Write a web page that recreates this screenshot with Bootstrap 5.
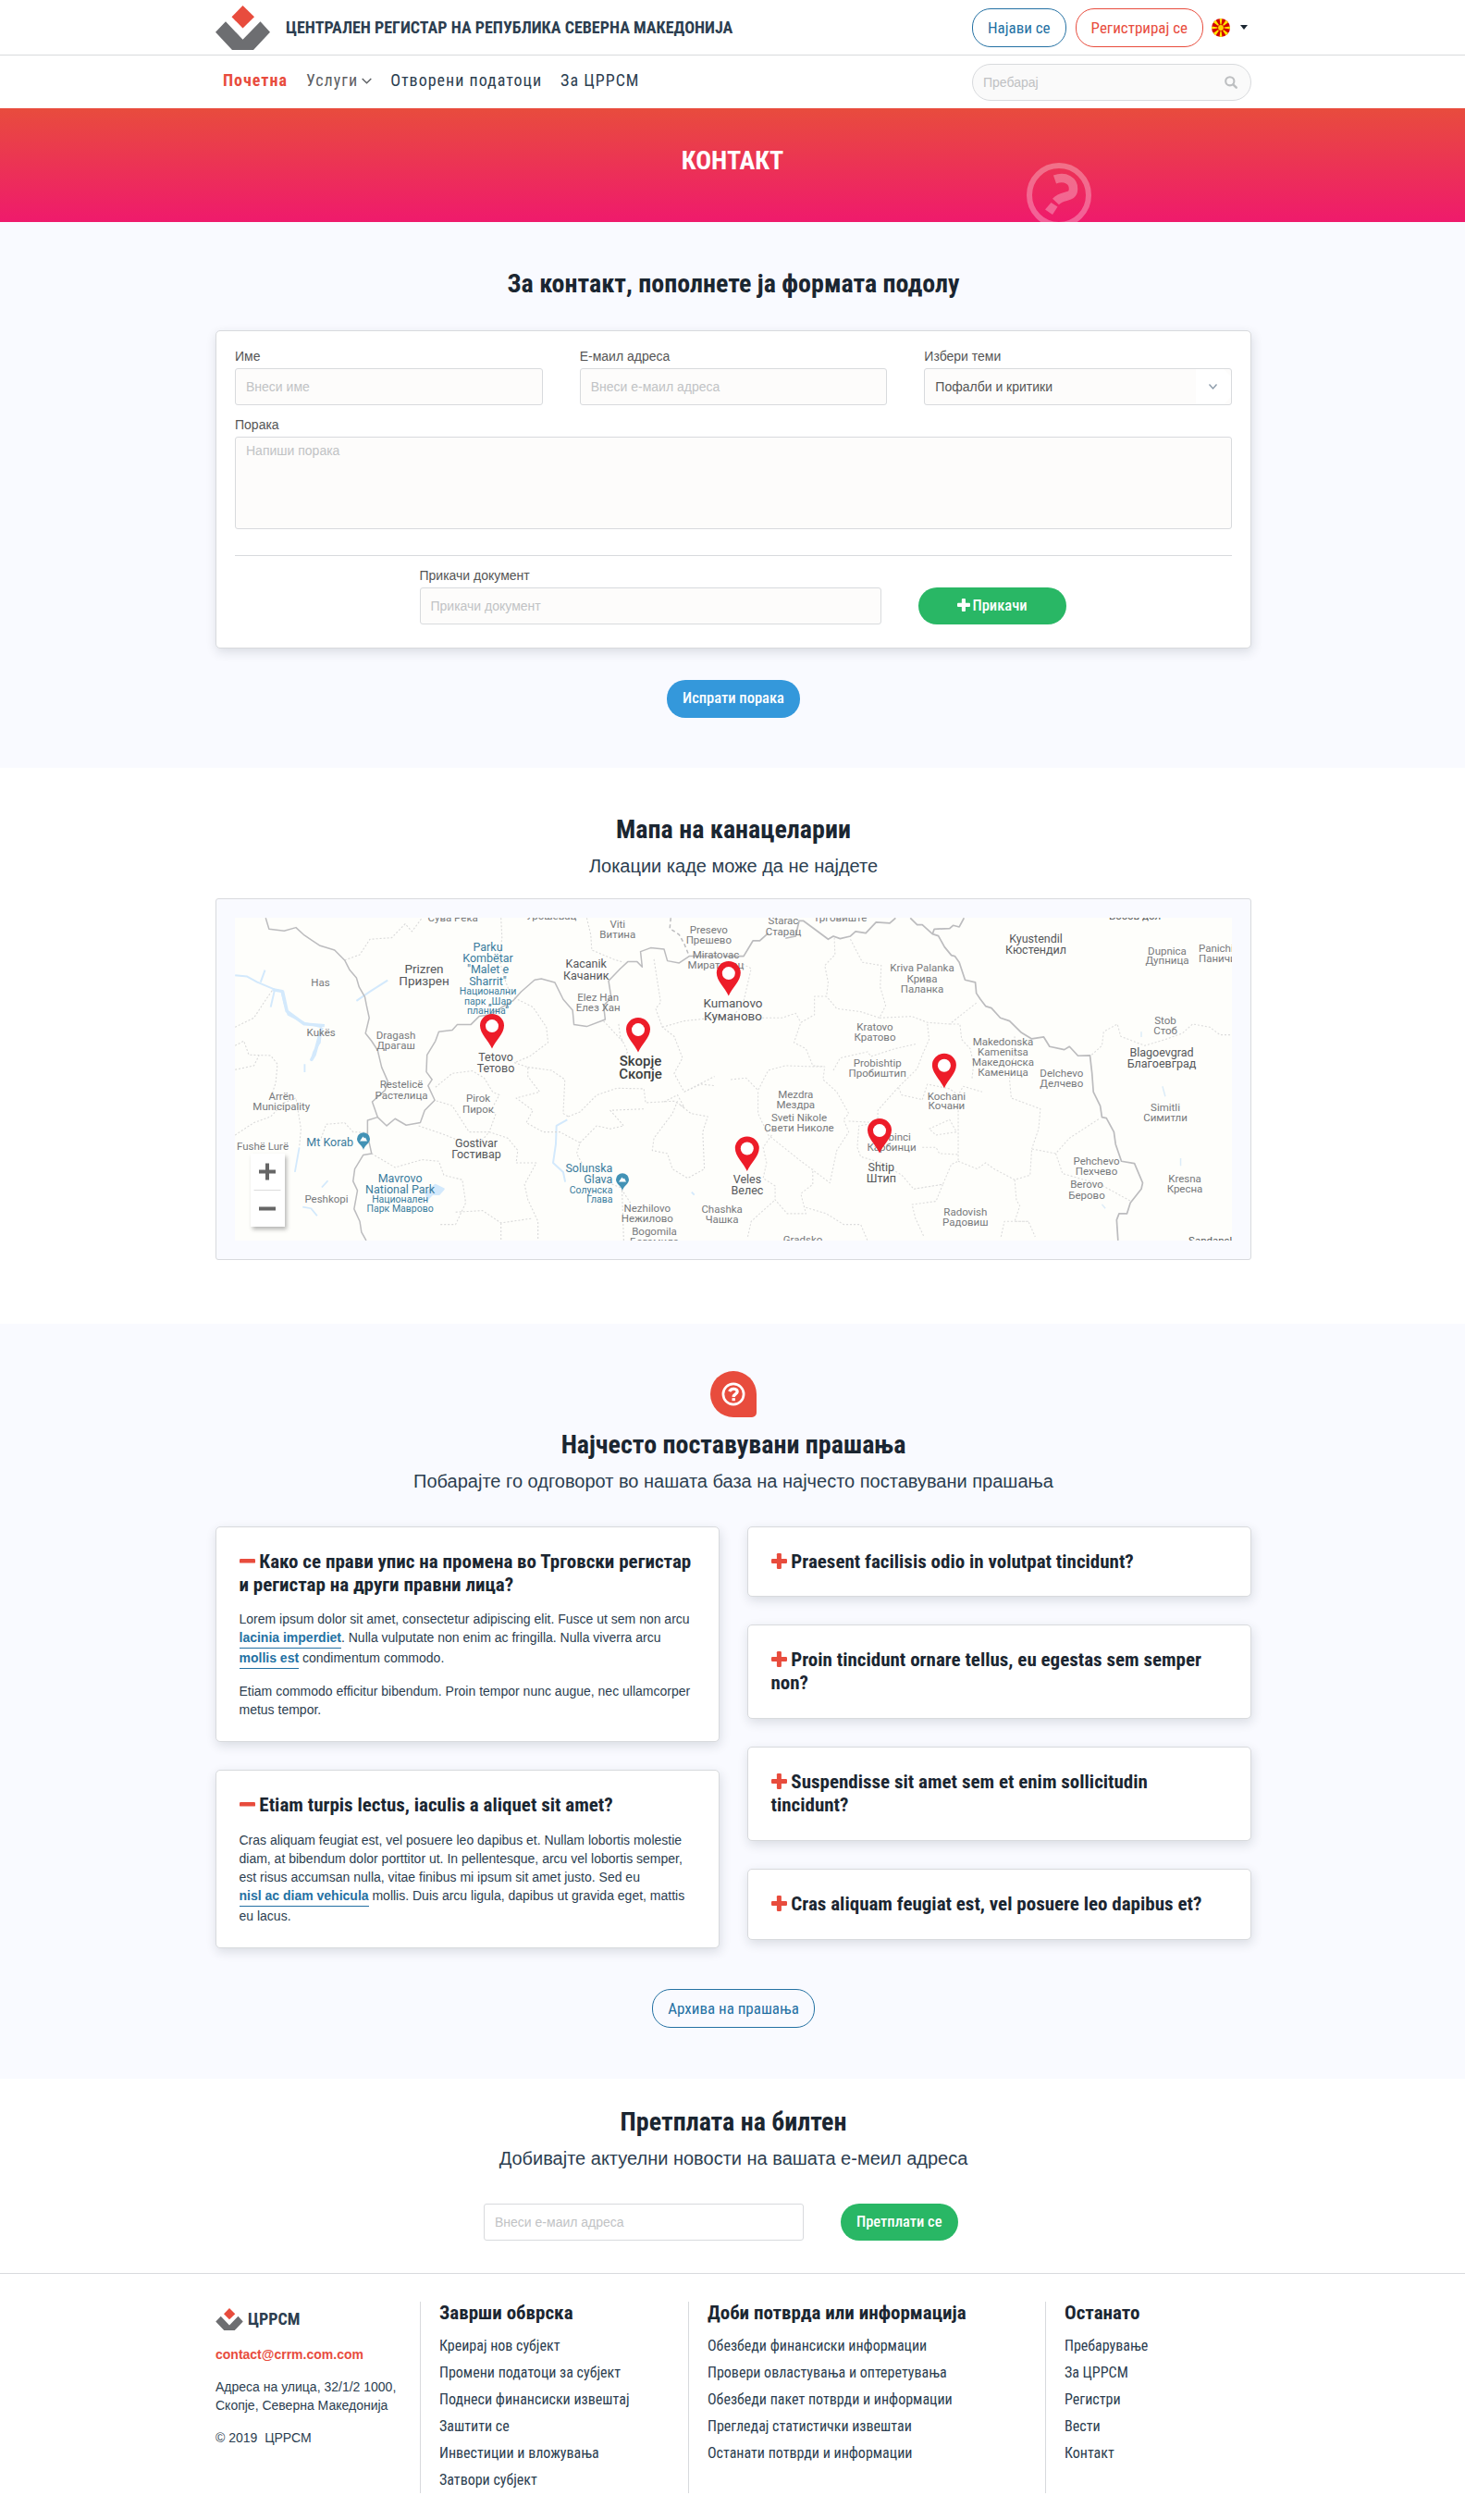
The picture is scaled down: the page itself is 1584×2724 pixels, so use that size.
<!DOCTYPE html>
<html lang="mk">
<head>
<meta charset="utf-8">
<meta name="viewport" content="width=device-width, initial-scale=1">
<title>ЦРРСМ - Контакт</title>
<link rel="stylesheet" href="https://cdn.jsdelivr.net/npm/bootstrap@5.3.0/dist/css/bootstrap.min.css">
<style>
:root{--ink:#2c3e50;--dark:#1b2631;--line:#d8dadd;--red:#e84c3d;--blue:#2471a3;--pale:#f9faff}
body{font-family:"Liberation Sans",Arial,sans-serif;font-size:14px;line-height:20px;color:var(--ink);background:#fff}
.container{max-width:1122px;padding:0 0 0 2px}
.cond,h1,h2,h3,h4,.btn{font-family:"Roboto Condensed",Roboto,sans-serif}
h1,h2,h3,h4{color:var(--dark);font-weight:700;margin:0;line-height:1.2}
h1,h2{font-size:28px}
h3,h4{font-size:21px}
.subtitle{font-size:20px;line-height:24px;margin:10px 0 0}
a{text-decoration:none}
.topline{height:60px;border-bottom:1px solid var(--line)}
.brand-name{font-size:18px;font-weight:700;line-height:22px;margin-left:17px}
.btn{font-size:17px;line-height:22px;border-radius:20px;padding:0 16px;height:41px;display:inline-flex;align-items:center;justify-content:center;white-space:nowrap}
.btn-line-blue{border:1px solid var(--blue);color:var(--blue)}
.btn-line-red{border:1px solid var(--red);color:var(--red)}
.topline .btn{height:42px}
.btn-send{background:#3498db;color:#fff;font-size:16.5px;font-weight:500}
.btn-go{background:#29b765;color:#fff;height:40px;font-size:16.5px;font-weight:500}
.lang-caret{border:4px solid transparent;border-top:5px solid var(--dark);border-bottom:0;margin-left:11px}
.menu-bar{height:57px}
.menu-bar .nav-link{padding:0;font-size:18px;line-height:24px;letter-spacing:1px;color:var(--ink)}
.menu-bar .nav-link.active{color:var(--red);font-weight:700}
.menu-bar .nav-link.has-sub{color:#5d6064}
.search-box{width:302px;height:40px;border:1px solid var(--line);border-radius:20px;background:#fafafa;color:#bfc1c3;padding:0 14px 0 11px}
.hero{height:123px;background:linear-gradient(#e84c3d,#ef1a6c);overflow:hidden;position:relative}
.hero h1{color:#fff;padding-top:40px}
.hero-mark{position:absolute;left:1110px;top:58px}
.pale{background:var(--pale)}
.panel{background:#fff;border:1px solid var(--line);border-radius:5px;box-shadow:1px 4px 12px rgba(30,40,60,.14)}
.form-label{margin:0 0 3px;line-height:20px;color:#555;display:block}
.form-control,.form-select{height:40px;border:1px solid var(--line);border-radius:3px;background-color:#fdfcfb;font-size:14px;line-height:20px;padding:0 11px;color:#555}
.form-control::placeholder{color:#c1c3c5;opacity:1}
.form-row{display:flex;gap:40px}
.form-row>div{flex:1}
textarea.form-control{height:100px;padding-top:4px;resize:none}
.pick{position:relative}
.pick .form-select{background-image:none}
.pick svg{position:absolute;right:1px;bottom:1px}
.form-panel{padding:17px 20px 25px;margin-top:33px}
.rule{height:1px;background:var(--line);margin:28px 0 11px}
.map-frame{border:1px solid var(--line);border-radius:3px;padding:20px;margin-top:23px;height:391px}
.map-canvas{display:block;font-family:Roboto,sans-serif}
.faq-badge{width:50px;height:50px;background:var(--red);border-radius:25px 25px 5px 25px;display:flex;align-items:center;justify-content:center}
.faq-list{width:545px;display:flex;flex-direction:column;gap:30px}
.faq-item{padding:25px 24px 24.5px 24.5px}
.faq-item p{margin:14px 0 0}
.faq-item p a{display:inline-block;font-weight:700;color:var(--blue);border-bottom:1px solid var(--blue);padding-bottom:1px}
.sign{vertical-align:-1px}
.mail-input{width:346px;background:#fff}
.site-footer{border-top:1px solid var(--line);padding-top:30px}
.foot-col{height:207px;border-left:1px solid var(--line);padding-left:20px}
.foot-col ul{list-style:none;margin:8px 0 0;padding:0;font-size:16px;line-height:29px}
.foot-col a,.foot-col li{color:var(--ink)}
.foot-about p{margin:0 0 15px}
</style>
</head>
<body>
<svg width="0" height="0" class="position-absolute">
  <symbol id="logo" viewBox="0 0 59 48"><path fill="#e84c3d" d="M29.500 0 42 12.300 29.500 24.500 17.500 12.300z"/><path fill="#6d6e71" d="M11 17.300 0 28.800 18 48H41L59 28.800 48.500 17.300 29.500 36.800z"/></symbol>
  <symbol id="plus" viewBox="0 0 17 17"><rect x="5.900" width="5" height="17" rx="1.200"/><rect y="5.900" width="17" height="5" rx="1.200"/></symbol>
  <symbol id="minus" viewBox="0 0 17 17"><rect y="6" width="17" height="4.600" rx="1.200"/></symbol>
</svg>

<header>
  <div class="topline">
    <div class="container d-flex align-items-center h-100">
      <svg width="59" height="48"><use href="#logo"/></svg>
      <span class="brand-name cond">ЦЕНТРАЛЕН РЕГИСТАР НА РЕПУБЛИКА СЕВЕРНА МАКЕДОНИЈА</span>
      <div class="d-flex align-items-center ms-auto" style="width:302px">
        <a class="btn btn-line-blue" href="#">Најави се</a>
        <a class="btn btn-line-red" href="#" style="margin:0 9px 0 10px">Регистрирај се</a>
        <svg width="20" height="20" viewBox="0 0 20 20"><clipPath id="disc"><circle cx="10" cy="10" r="10"/></clipPath><g clip-path="url(#disc)"><path fill="#d20000" d="M0 0h20v20H0z"/><path fill="#ffe600" d="M8.500 0h3l-1.500 10zM8.500 20h3l-1.500-10zM0 8.500v3l10-1.500zM20 8.500v3l-10-1.500zM1 1h3l6 9L1 3.500zM19 1h-3l-6 9L19 3.500zM1 19h3l6-9L1 16.500zM19 19h-3l-6-9L19 16.500z"/><circle cx="10" cy="10" r="3.600" fill="#d20000"/><circle cx="10" cy="10" r="2.900" fill="#ffd400"/></g></svg>
        <span class="lang-caret"></span>
      </div>
    </div>
  </div>
  <div class="menu-bar">
    <div class="container d-flex align-items-center h-100">
      <nav class="nav cond" style="gap:20px;padding-left:8px;margin-top:-3px">
        <a class="nav-link active" href="#">Почетна</a>
        <a class="nav-link has-sub" href="#">Услуги<svg class="ms-1" width="11" height="7" viewBox="0 0 11 7" fill="none" stroke="#5d6064" stroke-width="1.400" style="vertical-align:2px"><path d="M.7.9 5.500 5.700 10.300.9"/></svg></a>
        <a class="nav-link" href="#">Отворени податоци</a>
        <a class="nav-link" href="#">За ЦРРСМ</a>
      </nav>
      <div class="search-box d-flex align-items-center justify-content-between ms-auto">Пребарај
        <svg width="14" height="14" viewBox="0 0 14 14" fill="none" stroke="#bdbfc1"><circle cx="5.800" cy="5.800" r="4.600" stroke-width="2.100"/><path d="M9.300 9.300 12.700 12.700" stroke-width="2.400" stroke-linecap="round"/></svg>
      </div>
    </div>
  </div>
</header>

<div class="hero text-center">
  <h1>КОНТАКТ</h1>
  <svg class="hero-mark" width="70" height="72" viewBox="-35 -36 70 72"><g opacity=".3"><circle r="32" stroke-width="6" fill="none" stroke="#fff"/><path stroke-width="9.500" fill="none" stroke="#fff" d="M-4.500-17C7-21 16-15.500 15.500-6.500 15 4 4.500-1.500-3.500 7"/><path fill="#fff" d="M-8.500 8 -1.500 12.500 -7 21 -15 15.500z"/></g></svg>
</div>

<section class="pale" style="height:590px;padding-top:50px">
  <div class="container">
    <h2 class="text-center">За контакт, пополнете ја формата подолу</h2>
    <form class="panel form-panel">
      <div class="form-row">
        <div><label class="form-label">Име</label><input class="form-control" placeholder="Внеси име"></div>
        <div><label class="form-label">Е-маил адреса</label><input class="form-control" placeholder="Внеси е-маил адреса"></div>
        <div class="pick"><label class="form-label">Избери теми</label><select class="form-select"><option>Пофалби и критики</option></select>
          <svg width="38" height="38" viewBox="0 0 38 38"><path fill="#fff" d="M0 0h30l8 8v22l-8 8H0z"/><path fill="none" stroke="#8a99a8" stroke-width="1.300" d="M14.500 16.500 18.500 21 22.500 16.500"/></svg></div>
      </div>
      <label class="form-label" style="margin-top:11px">Порака</label>
      <textarea class="form-control" placeholder="Напиши порака"></textarea>
      <div class="rule"></div>
      <div class="d-flex align-items-end" style="padding-left:199.5px;gap:40px">
        <div style="width:499px"><label class="form-label">Прикачи документ</label><input class="form-control" placeholder="Прикачи документ"></div>
        <button type="button" class="btn btn-go" style="width:160px"><svg width="14" height="14" fill="#fff" style="margin:-2px 3px 0 0"><use href="#plus"/></svg>Прикачи</button>
      </div>
    </form>
    <div class="text-center" style="margin-top:34px"><button type="button" class="btn btn-send">Испрати порака</button></div>
  </div>
</section>

<section style="height:601px;padding-top:50px">
  <div class="container">
    <div class="text-center"><h2>Мапа на канацеларии</h2><p class="subtitle">Локации каде може да не најдете</p></div>
    <div class="map-frame pale">
      <svg class="map-canvas" width="1078" height="349" viewBox="0 0 1078 349">
        <defs><filter id="soft" x="-30%" y="-30%" width="180%" height="160%"><feDropShadow dx="2" dy="3" stdDeviation="2" flood-opacity=".28"/></filter></defs>
        <rect width="1078" height="349" fill="#fefefb"/>
        <!-- west half -->
        <g transform="translate(-34 -121.700) scale(.3635 .3333)" fill="none" stroke-linejoin="round">
          <g stroke="#d3e9fc" stroke-width="7"><path d="M94 552 130 556 160 574 212 598 232 604 240 640 252 680 300 706 350 720 346 770 328 800 320 830M212 598 200 655M183 535 170 574M455 635 495 605 548 568M1082 1020 1050 1040 1048 1100 1040 1160 1070 1190 1076 1222" vector-effect="non-scaling-stroke" stroke-width="2"/><path d="M205 598 235 604 248 668 300 710 360 715M352 722 330 810 320 828" stroke-width="10"/><path d="M660 1260 690 1232 714 1245 700 1262 680 1262 664 1280" fill="#d3e9fc"/><path d="M301 840V866M285 1110 272 1190M295 1303 320 1308 338 1332M370 1218 352 1240M1452 1255 1460 1264" stroke-width="5"/></g>
          <g stroke="#d9d9d9" stroke-width="1.100" stroke-dasharray="2 2"><path vector-effect="non-scaling-stroke" d="M420 503 465 485 495 435 560 430 600 385 620 410 650 366M885 366 888 430 880 500 895 560 915 620M1140 366 1152 420 1155 470 1220 500 1250 510M94 780 120 765 135 810 200 812 220 840 215 900 200 950M94 858 150 845 165 812M94 720 150 690 180 640 205 600M94 1070 150 1030 200 1010 240 965 275 950 290 1050 285 1110M350 1080 365 1035 420 1030 445 1060 490 1062M690 915 740 870 800 862 835 885 860 930 880 940 855 990 870 1000 850 1060 790 1060 740 975 690 958M640 1040 720 1070 810 1110 850 1060 905 1080 935 1120 930 1160 990 1160 955 1230 965 1280 995 1350 995 1410M925 625 980 655 1020 720 1025 770 970 815 925 835M965 850 1035 860 1075 890 1070 1000 1085 1010M925 835 965 850 965 880 1000 930 930 950 980 990 960 1030 1010 1060 1060 1060 1120 1095 1110 1130 1145 1200 1240 1240 1270 1290M1085 1010 1120 995 1170 940 1230 918 1310 920 1315 965 1400 960 1430 980 1410 940 1365 965M1120 1095 1170 1040 1210 1050 1250 1040 1210 990 1315 985M1340 500 1360 640 1345 660 1365 720 1400 750 1425 820 1400 870 1430 930 1480 905 1520 910M1235 710 1240 750 1262 800 1240 830M1190 700 1250 770M1410 960 1395 1000 1340 1080 1335 1120 1380 1130 1395 1180 1440 1210 1490 1180 1485 1060 1500 1010 1450 1000 1415 970M500 1130 570 1175 650 1150 700 1155 715 1200 770 1215 780 1290 750 1360 700 1360M750 1320 830 1315 885 1355 980 1340M885 1355 885 1412M1245 1250 1250 1412M1430 930 1520 880M1365 720 1430 700 1560 685"/></g>
          <g stroke="#bcbcbe" stroke-width="1.500"><path vector-effect="non-scaling-stroke" d="M185 366 195 402 240 408 275 397 300 422 345 455 390 470 420 503 435 535 455 560 463 590 480 622 485 650 493 690 482 740 500 765 518 795 530 850 548 895 540 925 502 962 518 1012 545 1040 570 1017 603 1038 645 1030 658 990 688 957 668 910 680 890 663 865 665 810 690 765 700 735 740 730 755 712 795 712 820 685 850 680 920 635 945 605 985 567 1005 563 1045 575 1070 630 1098 665 1102 712 1140 718 1195 695 1190 650 1213 625 1205 570 1240 530 1262 508 1290 508 1305 525 1300 475 1330 463 1370 467 1380 505 1415 512 1445 490 1530 490M518 1012 488 1022 488 1070 500 1130 475 1135 450 1180 445 1220 458 1250 448 1310 465 1350 470 1385 484 1412"/><path vector-effect="non-scaling-stroke" stroke-dasharray="4 3" d="M1390 366 1387 400 1415 420 1430 450 1445 490"/></g>
        </g>
        <!-- east half -->
        <g transform="translate(536 -121.700) scale(.37 .3333)" fill="none" stroke-linejoin="round">
          <g stroke="#dcdcdc" stroke-width="1.100" stroke-dasharray="2 2"><path vector-effect="non-scaling-stroke" d="M303 430 305 485 275 520 285 575 280 620 245 620 245 680 205 705 185 770 220 790 240 845 275 848M350 435 385 510 440 520 437 590 453 650 435 690 380 670 310 660 280 620M435 690 530 685 575 705 640 710 720 640M640 710 670 710 675 760 700 790 710 840 705 890M575 710 580 760 560 810 545 855 490 915 500 940 560 955M560 955 575 905 640 920 665 940 680 912 735 930M0 690 35 650 60 530 35 515M60 690 120 690 150 690 190 675 205 705M0 890 45 885 80 925 110 860 160 845 240 848 275 848 270 890 310 930 345 1000 330 1020 345 1060 310 1120 290 1225 200 1150 110 1070 80 1000 80 925M300 860 320 820 400 800 410 815 480 790 540 775M120 1070 95 1110 105 1160 95 1210 130 1235 130 1280 165 1325 220 1325 205 1260 240 1230 240 1180M345 1025 430 1030 430 990 490 915M430 1030 375 1040 370 1110 380 1140 440 1160 500 1200 535 1245 620 1230 645 1165 665 1155 665 935M560 1110 600 1110 610 1130 665 1133M580 1050 640 1020 660 1060 600 1070 580 1050M665 1155 720 1180 745 1160 770 1180 830 1215 875 1200 880 1115 950 1130 990 1080 1080 1015M830 750 830 800 815 890 820 950 905 985 900 1050 880 1115M950 1130 970 1195 1080 1230 1170 1285M220 1305 280 1325 330 1360 380 1360 400 1412M535 1245 620 1230 600 1285 530 1295 540 1340 565 1400M790 1400 800 1350 870 1350 890 1400M830 1215 835 1280 845 1300 830 1350 870 1350M50 1400 60 1350 130 1280M1055 810 1085 780 1090 735 1130 710 1140 750 1210 780 1270 760 1320 740 1350 710 1400 720 1430 745 1465 745"/></g>
          <g stroke="#bcbcbe" stroke-width="1.700"><path vector-effect="non-scaling-stroke" d="M-22 490H38L65 440H85L110 415M160 432 190 425 200 375H212L245 402 285 435 300 425 320 433 350 425 365 410 395 415 425 380 465 383 482 366M525 366 545 388 560 388 590 418 607 424 625 460 645 487 655 490 668 510 685 567 715 575 718 610 730 630 745 652 762 658 788 690 815 700 850 738 880 758 915 752 932 783 975 793 990 783 1015 813 1050 812 1056 870 1060 930 1080 975 1085 1012 1098 1015 1120 1060 1125 1100 1142 1155 1180 1162 1204 1225 1200 1245 1168 1290 1158 1325H1135L1128 1345 1132 1412M590 418 595 402 640 400 650 390 668 395 682 366"/></g>
          <path stroke="#dcecf8" stroke-width="4" d="M1200 735V752M1262 912 1270 945M1315 1145V1170M1085 1295 1095 1308"/>
        </g>
        <g id="places" text-anchor="middle"></g>
        <g id="peaks"></g>
        <g id="pins"></g>
        <g filter="url(#soft)"><rect x="17" y="255" width="37" height="79" fill="#fff"/></g>
        <path d="M20.500 294.500H49.500" stroke="#dcdcdc"/>
        <path d="M26 274.500H44M35 265.500V283.500M26 314.500H44" stroke="#666" stroke-width="4"/>
      </svg>
    </div>
  </div>
</section>

<section class="pale" style="height:816px;padding-top:51px">
  <div class="container">
    <div class="faq-badge mx-auto"><svg width="26" height="26" viewBox="-13 -13 26 26" fill="none" stroke="#fff"><circle r="11.100" stroke-width="2.700"/><path stroke-width="3.400" d="M-4.300-2.800C-2.500-7 4.600-6.200 4.100-2.400 3.800 0 .2-.2.200 3"/><rect x="-1.500" y="4.200" width="3.400" height="3" fill="#fff" stroke="none"/></svg></div>
    <div class="text-center" style="padding-top:13px"><h2>Најчесто поставувани прашања</h2><p class="subtitle">Побарајте го одговорот во нашата база на најчесто поставувани прашања</p></div>
    <div class="d-flex justify-content-between align-items-start" style="margin-top:37px">
      <div class="faq-list">
        <div class="panel faq-item">
          <h3><svg class="sign" width="17" height="17" fill="#e84c3d"><use href="#minus"/></svg> Како се прави упис на промена во Трговски регистар и регистар на други правни лица?</h3>
          <p>Lorem ipsum dolor sit amet, consectetur adipiscing elit. Fusce ut sem non arcu <a href="#">lacinia imperdiet</a>. Nulla vulputate non enim ac fringilla. Nulla viverra arcu <a href="#">mollis est</a> condimentum commodo.</p>
          <p>Etiam commodo efficitur bibendum. Proin tempor nunc augue, nec ullamcorper metus tempor.</p>
        </div>
        <div class="panel faq-item">
          <h3><svg class="sign" width="17" height="17" fill="#e84c3d"><use href="#minus"/></svg> Etiam turpis lectus, iaculis a aliquet sit amet?</h3>
          <p>Cras aliquam feugiat est, vel posuere leo dapibus et. Nullam lobortis molestie diam, at bibendum dolor porttitor ut. In pellentesque, arcu vel lobortis semper, est risus accumsan nulla, vitae finibus mi ipsum sit amet justo. Sed eu <a href="#">nisl ac diam vehicula</a> mollis. Duis arcu ligula, dapibus ut gravida eget, mattis eu lacus.</p>
        </div>
      </div>
      <div class="faq-list">
        <div class="panel faq-item"><h3><svg class="sign" width="17" height="17" fill="#e84c3d"><use href="#plus"/></svg> Praesent facilisis odio in volutpat tincidunt?</h3></div>
        <div class="panel faq-item"><h3><svg class="sign" width="17" height="17" fill="#e84c3d"><use href="#plus"/></svg> Proin tincidunt ornare tellus, eu egestas sem semper non?</h3></div>
        <div class="panel faq-item"><h3><svg class="sign" width="17" height="17" fill="#e84c3d"><use href="#plus"/></svg> Suspendisse sit amet sem et enim sollicitudin tincidunt?</h3></div>
        <div class="panel faq-item"><h3><svg class="sign" width="17" height="17" fill="#e84c3d"><use href="#plus"/></svg> Cras aliquam feugiat est, vel posuere leo dapibus et?</h3></div>
      </div>
    </div>
    <div class="text-center" style="margin-top:44px"><a class="btn btn-line-blue" href="#" style="height:42px">Архива на прашања</a></div>
  </div>
</section>

<section style="height:210px;padding-top:30px">
  <div class="container">
    <div class="text-center"><h2>Претплата на билтен</h2><p class="subtitle">Добивајте актуелни новости на вашата е-меил адреса</p></div>
    <div class="d-flex" style="margin:37px 0 0 290px;gap:40px">
      <input class="form-control mail-input" placeholder="Внеси е-маил адреса">
      <button type="button" class="btn btn-go">Претплати се</button>
    </div>
  </div>
</section>

<footer class="site-footer">
  <div class="container d-flex">
    <div class="foot-about" style="width:221px;padding-top:7px">
      <div class="d-flex align-items-center" style="margin-bottom:16px"><svg width="30" height="24"><use href="#logo"/></svg><span class="cond fw-bold" style="font-size:18px;margin-left:5px">ЦРРСМ</span></div>
      <p class="fw-bold" style="color:#e84c3d">contact@crrm.com.com</p>
      <p>Адреса на улица, 32/1/2 1000,<br>Скопје, Северна Македонија</p>
      <p>© 2019 &nbsp;ЦРРСМ</p>
    </div>
    <div class="foot-col cond" style="width:290px"><h4>Заврши обврска</h4><ul><li>Креирај нов субјект</li><li>Промени податоци за субјект</li><li>Поднеси финансиски извештај</li><li>Заштити се</li><li>Инвестиции и вложувања</li><li>Затвори субјект</li></ul></div>
    <div class="foot-col cond" style="width:386px"><h4>Доби потврда или информација</h4><ul><li>Обезбеди финансиски информации</li><li>Провери овластувања и оптеретувања</li><li>Обезбеди пакет потврди и информации</li><li>Прегледај статистички извештаи</li><li>Останати потврди и информации</li></ul></div>
    <div class="foot-col cond"><h4>Останато</h4><ul><li>Пребарување</li><li>За ЦРРСМ</li><li>Регистри</li><li>Вести</li><li>Контакт</li></ul></div>
  </div>
</footer>

<script src="https://cdn.jsdelivr.net/npm/bootstrap@5.3.0/dist/js/bootstrap.bundle.min.js"></script>
<script>
// Place names: x, font size, fill, anchor, then pairs of baseline and text
const town = '#77797c', city = '#55575a', park = '#3a7c9d', capital = '#3c3e40';
const places = [
 [92.5,11.5,town,'',73.6,'Has'],[93.2,11.5,town,'',127.6,'Kukës'],
 [204.5,13.5,city,'',60,'Prizren',73.3,'Призрен'],
 [273.5,12.5,park,'',36.3,'Parku',48.3,'Kombëtar',60.3,'"Malet e',72.6,'Sharrit"'],
 [273.5,10.5,park,'',83.3,'Национални',93.6,'парк „Шар',103.6,'планина“'],
 [235.7,11.5,town,'',3.6,'Сува Река'],[342,11.5,town,'',1.6,'Урошевац'],
 [413.8,11.5,town,'',11,'Viti',22.3,'Витина'],
 [379.7,12.5,city,'',54.3,'Kacanik',66.6,'Качаник'],
 [392.7,11.5,town,'',90.3,'Elez Han',101.3,'Елез Хан'],
 [174,11.5,town,'',130.6,'Dragash',141.6,'Драгаш'],
 [180,11.5,town,'',184.3,'Restelicë',195.6,'Растелица'],
 [50.3,11.5,town,'',196.6,'Arrën',207.6,'Municipality'],
 [30,11.5,town,'',251,'Fushë Lurë'],[102.7,12.5,park,'',247.3,'Mt Korab'],
 [99,11.5,town,'',307.6,'Peshkopi'],
 [282,12.5,city,'',155,'Tetovo',167,'Тетово'],
 [438.5,15,capital,'',159.6,'Skopje',174.3,'Скопје'],
 [263,11.5,town,'',199.3,'Pirok',210.6,'Пирок'],
 [261,12.5,city,'',248,'Gostivar',260,'Гостивар'],
 [178.6,12.5,park,'',285.6,'Mavrovo',297.6,'National Park'],
 [178.6,10.5,park,'',308.3,'Национален',318.3,'Парк Маврово'],
 [408.4,12.5,park,'end',275,'Solunska',287.3,'Glava'],
 [408.4,10.5,park,'end',298,'Солунска',307.6,'Глава'],
 [445.8,11.5,town,'',318,'Nezhilovo',329,'Нежилово'],
 [453.5,11.5,town,'',342.6,'Bogomila',353.6,'Богомила'],
 [512.3,11.5,town,'',17,'Presevo',28,'Прешево'],
 [520,11.5,town,'',44,'Miratovac',55,'Миратовац'],
 [538.5,13.5,city,'',97.3,'Kumanovo',110.6,'Куманово'],
 [526.6,11.5,town,'',319.3,'Chashka',330.3,'Чашка'],
 [593,11.5,town,'',7.3,'Starac',18.6,'Старац'],[654.4,11.5,town,'',4.3,'Трговиште'],
 [866,12.5,city,'',27.3,'Kyustendil',39,'Кюстендил'],[973,11.5,city,'',1.6,'Бобов дол'],
 [1008,11.5,town,'',39.6,'Dupnica',50.3,'Дупница'],
 [1042,11.5,town,'start',37.3,'Panichishte',48.3,'Паничище'],
 [743,11.5,town,'',58.3,'Kriva Palanka',70.3,'Крива',81,'Паланка'],
 [692,11.5,town,'',122,'Kratovo',133.3,'Кратово'],[1006,11.5,town,'',114.6,'Stob',125.6,'Стоб'],
 [830.5,11.5,town,'',138,'Makedonska',149,'Kamenitsa',160.3,'Македонска',171.3,'Каменица'],
 [1002,12.5,city,'',150,'Blagoevgrad',161.8,'Благоевград'],
 [694.7,11.5,town,'',161,'Probishtip',172.3,'Пробиштип'],
 [893.8,11.5,town,'',172.3,'Delchevo',183.3,'Делчево'],
 [769.4,11.5,town,'',196.6,'Kochani',207.3,'Кочани'],
 [606.3,11.5,town,'',194.6,'Mezdra',205.6,'Мездра'],
 [610,11.5,town,'',220,'Sveti Nikole',230.6,'Свети Николе'],
 [1006,11.5,town,'',208.6,'Simitli',219.6,'Симитли'],
 [710,11.5,town,'',241.3,'Karbinci',252,'Карбинци'],
 [698.8,12.5,city,'',274.3,'Shtip',286,'Штип'],[554,12.5,city,'',287,'Veles',299,'Велес'],
 [931.5,11.5,town,'',267.3,'Pehchevo',278.3,'Пехчево'],
 [921,11.5,town,'',292.3,'Berovo',303.6,'Берово'],
 [1027,11.5,town,'',286,'Kresna',297,'Кресна'],
 [789.8,11.5,town,'',322.3,'Radovish',333.3,'Радовиш'],
 [614,11.5,town,'',351.6,'Gradsko'],[1057.6,11.5,city,'',353,'Sandanski']
];
let out = '';
for (const [x, size, fill, anchor, ...rows] of places)
  for (let i = 0; i < rows.length; i += 2)
    out += `<text x="${x}" y="${rows[i]}" font-size="${size}" fill="${fill}"${anchor ? ` text-anchor="${anchor}"` : ''}${fill === capital ? ' font-weight="500"' : ''}>${rows[i + 1]}</text>`;
document.getElementById('places').innerHTML = out;
// Office pins, given by the tip
document.getElementById('pins').innerHTML = [[278,141.6],[436,145.6],[533.8,84.6],[766.9,184.3],[697,254.6],[553.8,274]]
  .map(([x, y]) => `<g transform="translate(${x} ${y})"><path fill="#ed1c29" d="M0 0C-4-9-13-16-13-25A13 12.500 0 0 1 13-25C13-16 4-9 0 0z"/><circle cy="-24.500" r="7" fill="#fff"/></g>`).join('');
document.getElementById('peaks').innerHTML = [[139,251],[419,295]]
  .map(([x, y]) => `<g transform="translate(${x} ${y})"><path fill="#4292b5" d="M0 0C-1-5-7-7-7-12A7 6.800 0 0 1 7-12C7-7 1-5 0 0z"/><path fill="#fff" d="M-4-9.500-.5-14.500 1-12.500 2-13.500 4-9.500z"/></g>`).join('');
</script>
</body>
</html>
